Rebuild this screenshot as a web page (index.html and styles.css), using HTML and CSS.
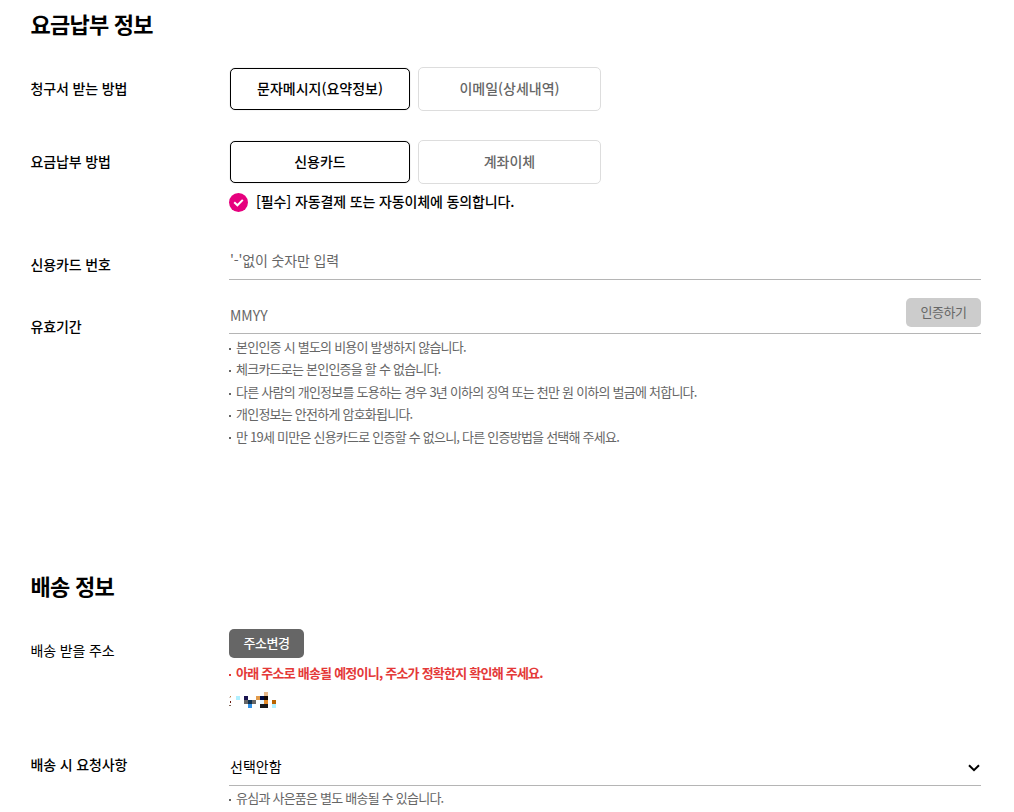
FILE: index.html
```html
<!DOCTYPE html>
<html lang="ko">
<head>
	<meta charset="UTF-8">
	<title>요금납부 정보</title>
	<link rel="stylesheet" href="styles.css">
</head>
<body>
	<section class="pay">
		<h2>요금납부 정보</h2>
		<div class="row bill">
			<div class="label">청구서 받는 방법</div>
			<div class="cont choice">
				<button class="on">문자메시지(요약정보)</button>
				<button>이메일(상세내역)</button>
			</div>
		</div>
		<div class="row method">
			<div class="label">요금납부 방법</div>
			<div class="cont">
				<div class="choice">
					<button class="on">신용카드</button>
					<button>계좌이체</button>
				</div>
				<div class="agree">
					<svg width="19" height="19" viewBox="0 0 19 19">
						<circle cx="9.5" cy="9.5" r="9.5" fill="#e6007e"/>
						<path d="M5.2 9.2l3.2 3.1 5.4-5.4" fill="none" stroke="#fff" stroke-width="2"/>
					</svg>
					<span>[필수] 자동결제 또는 자동이체에 동의합니다.</span>
				</div>
			</div>
		</div>
		<div class="row card">
			<div class="label">신용카드 번호</div>
			<div class="cont"><input type="text" placeholder="'-'없이 숫자만 입력"></div>
		</div>
		<div class="row expiry">
			<div class="label">유효기간</div>
			<div class="cont">
				<div class="field">
					<input type="text" placeholder="MMYY">
					<button class="btn off">인증하기</button>
				</div>
				<ul class="notes">
					<li>본인인증 시 별도의 비용이 발생하지 않습니다.</li>
					<li>체크카드로는 본인인증을 할 수 없습니다.</li>
					<li>다른 사람의 개인정보를 도용하는 경우 3년 이하의 징역 또는 천만 원 이하의 벌금에 처합니다.</li>
					<li>개인정보는 안전하게 암호화됩니다.</li>
					<li>만 19세 미만은 신용카드로 인증할 수 없으니, 다른 인증방법을 선택해 주세요.</li>
				</ul>
			</div>
		</div>
	</section>
	<section class="delivery">
		<h2>배송 정보</h2>
		<div class="row address">
			<div class="label normal">배송 받을 주소</div>
			<div class="cont">
				<button class="btn">주소변경</button>
				<ul class="notes red">
					<li>아래 주소로 배송될 예정이니, 주소가 정확한지 확인해 주세요.</li>
				</ul>
				<!-- 가려진 주소 -->
				<svg class="mosaic" width="48" height="16" viewBox="0 0 48 16" shape-rendering="crispEdges">
					<path d="M1 4h1v1h-1z" fill="#c08040"/>
					<path d="M0 5h2v1h-2z" fill="#ddd0c8"/>
					<path d="M1 9h1v2h-1z" fill="#6b1a10"/>
					<path d="M0 13h2v1h-2z" fill="#806858"/>
					<path d="M7 4h4v4h-4zM43 12h4v4h-4z" fill="#b0f0ff"/>
					<path d="M15 4h4v4h-4z" fill="#1b1550"/>
					<path d="M15 8h4v4h-4zM23 8h4v4h-4z" fill="#666"/>
					<path d="M19 8h4v4h-4z" fill="#10304f"/>
					<path d="M19 12h4v4h-4z" fill="#3090e6"/>
					<path d="M27 4h4v4h-4z" fill="#e29b4b"/>
					<path d="M31 4h4v4h-4z" fill="#000c45"/>
					<path d="M35 0h4v4h-4z" fill="#e8b98a"/>
					<path d="M35 4h4v4h-4z" fill="#170800"/>
					<path d="M31 8h4v4h-4z" fill="#e4f5ff"/>
					<path d="M35 8h4v4h-4z" fill="#e38a28"/>
					<path d="M31 12h8v4h-8z" fill="#1a1a1a"/>
					<path d="M43 8h4v4h-4z" fill="#b96300"/>
				</svg>
			</div>
		</div>
		<div class="row request">
			<div class="label">배송 시 요청사항</div>
			<div class="cont">
				<div class="select">
					<span>선택안함</span>
					<svg width="12" height="8" viewBox="0 0 12 8">
						<path d="M1 1.2l5 5 5-5" fill="none" stroke="#000" stroke-width="2"/>
					</svg>
				</div>
				<ul class="notes">
					<li>유심과 사은품은 별도 배송될 수 있습니다.</li>
				</ul>
			</div>
		</div>
	</section>
</body>
</html>
```
FILE: styles.css
```css
*{
	box-sizing: border-box;
}
body{
	margin: 0;
	height: 812px;
	overflow: hidden;
	background: #fff;
	color: #000;
	font-family: "Noto Sans CJK KR", sans-serif;
	font-size: 14px;
	line-height: 20px;
	letter-spacing: -0.13px;
}
section{
	padding: 0 33px 0 30.5px;
}
.pay{
	height: 570px;
	padding-top: 8px;
}
.delivery{
	height: 242px;
}
h2{
	margin: 0;
	height: 30px;
	font-size: 22px;
	line-height: 30px;
	font-weight: 700;
	letter-spacing: -0.75px;
}
.row{
	display: flex;
}
.label{
	width: 198.5px;
	font-weight: 500;
}
.label.normal{
	font-weight: 400;
}
.cont{
	width: 752px;
}
button{
	padding: 0 0 2px;
	font-family: inherit;
}
.bill{
	padding-top: 29px;
	height: 102px;
}
.bill .label, .method .label{
	padding-top: 11px;
}
.choice{
	display: flex;
	gap: 8px;
}
.choice button{
	width: 183px;
	height: 44px;
	border: 1px solid #ddd;
	border-radius: 5px;
	background: #fff;
	color: #666;
	font-size: 14px;
	font-weight: 500;
}
.choice .on{
	width: 180px;
	height: 42px;
	margin: 1px 0 1px 1px;
	border-color: #000;
	box-shadow: 0 0 1px #999;
	color: #000;
}
.method{
	height: 104px;
}
.agree{
	display: flex;
	align-items: center;
	gap: 8px;
	height: 36px;
	font-weight: 500;
}
.agree span{
	padding-bottom: 2px;
}
input{
	display: block;
	width: 100%;
	height: 36px;
	padding: 0 1px 3px;
	border: 0;
	border-bottom: 1px solid #b5b5b5;
	outline: 0;
	background: none;
	color: #000;
	font-family: inherit;
	font-size: 14px;
	letter-spacing: -0.15px;
}
input::placeholder{
	color: #666;
}
.card{
	height: 54px;
}
.card .label{
	padding-top: 10px;
}
.expiry .label{
	padding-top: 18px;
}
.field{
	display: flex;
	height: 36px;
	border-bottom: 1px solid #b5b5b5;
}
.field input{
	flex: 1;
	height: 35px;
	padding-bottom: 1px;
	border: 0;
	letter-spacing: 0;
}
.btn{
	display: block;
	width: 75px;
	height: 29px;
	border: 0;
	border-radius: 5px;
	background: #666;
	color: #fff;
	font-size: 13px;
	font-weight: 500;
	letter-spacing: -0.5px;
}
.btn.off{
	background: #ccc;
	color: #666;
	font-weight: 400;
}
.notes{
	margin: 0;
	padding: 2px 0 0;
	list-style: none;
	color: #666;
	font-size: 13px;
	line-height: 22.4px;
	letter-spacing: -0.77px;
}
.notes li{
	display: flex;
	align-items: center;
}
.notes li::before{
	content: "";
	width: 2px;
	height: 2px;
	margin: 3px 5px 0 0;
	background: currentColor;
}
.notes.red{
	padding-top: 4px;
	color: #e43938;
	font-weight: 700;
}
.address{
	padding-top: 29px;
	height: 136px;
}
.address .label{
	padding-top: 11px;
}
.mosaic{
	display: block;
	margin-top: 8px;
}
.request{
	padding-top: 12px;
}
.request .label{
	padding-top: 6px;
}
.select{
	display: flex;
	align-items: center;
	justify-content: space-between;
	height: 38px;
	padding: 0 1px;
	border-bottom: 1px solid #b5b5b5;
	letter-spacing: 0;
}
.select span{
	padding-bottom: 2px;
}
.select svg{
	margin-top: 2px;
}
.request .notes{
	padding-top: 1px;
}
```
